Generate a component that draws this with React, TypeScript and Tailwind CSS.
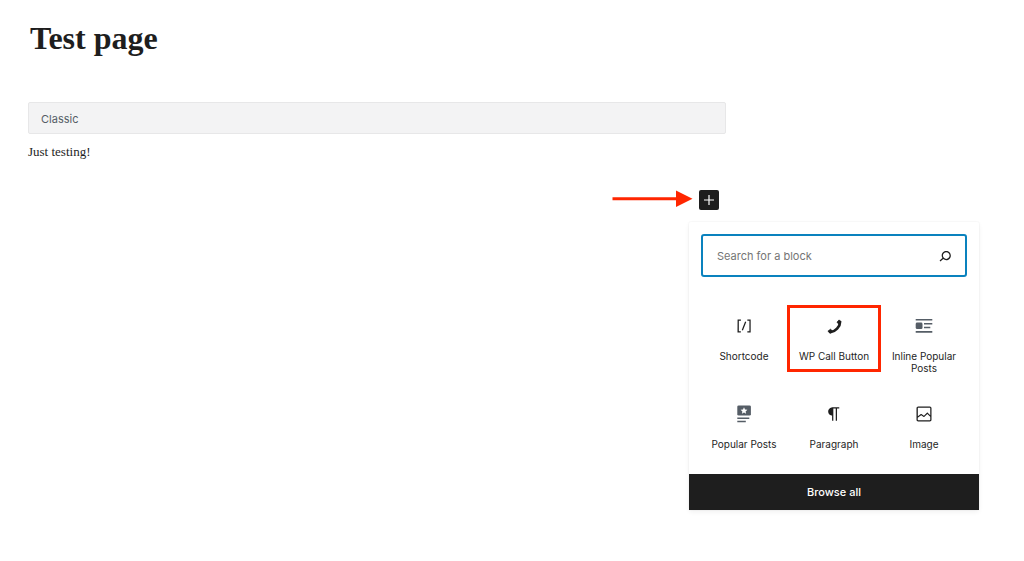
import type { ReactNode } from "react";

const icon = (path: string) => (
  <svg viewBox="0 0 24 24" className="size-5" fill="currentColor" aria-hidden="true">
    <path d={path} />
  </svg>
);

const SearchIcon = () =>
  icon(
    "M13.5 6C10.5 6 8 8.5 8 11.5c0 1.1.3 2.1.9 3l-3.4 3 1 1.1 3.4-2.9c1 .9 2.2 1.4 3.6 1.4 3 0 5.5-2.5 5.5-5.5C19 8.5 16.5 6 13.5 6zm0 9.5c-2.2 0-4-1.8-4-4s1.8-4 4-4 4 1.8 4 4-1.8 4-4 4z"
  );

const PhoneIcon = () => (
  <svg
    viewBox="0 0 17 17"
    className="size-[17px]"
    fill="none"
    stroke="currentColor"
    strokeLinejoin="round"
    aria-hidden="true"
  >
    <path d="M14 4.200C14.200 8.300 9.200 13.800 4.400 14.200" strokeWidth="2.7" strokeLinecap="round" />
    <path
      d="M11 4.300L13.200 1.900L15 3.800L13 6.200zM1.900 13.300L4.500 11.300L6.400 13L4.200 15.100z"
      fill="currentColor"
      strokeWidth="0.9"
    />
  </svg>
);

const InlinePostsIcon = () => (
  <svg viewBox="0 0 20 20" className="size-5 text-[#555d66]" fill="currentColor" aria-hidden="true">
    <path d="M1.7 2.9h16.6v1.6H1.7zM1.7 15.1h16.6v1.6H1.7zM10 7h8.3v1.5H10zM10 10.8h6.3v1.5H10z" />
    <rect x="1.7" y="6.5" width="6.8" height="6.6" rx="1.4" />
  </svg>
);

const PopularPostsIcon = () => (
  <svg viewBox="0 0 20 20" className="size-5 text-[#555d66]" aria-hidden="true">
    <rect x="3.3" y="1.4" width="13.6" height="10.2" rx="1.4" fill="currentColor" />
    <path d="M3.3 13.4h12v1.5h-12zM3.3 16.8h8.5v1.5H3.3z" fill="currentColor" />
    <path
      d="M10 3.3l1 2.3 2.4.2-1.8 1.6.5 2.4L10 8.5 7.9 9.8l.5-2.4-1.8-1.6 2.4-.2z"
      fill="#fff"
    />
  </svg>
);

type Block = { name: string; icon: ReactNode; highlighted?: boolean };

const blocks: Block[] = [
  {
    name: "Shortcode",
    icon: icon(
      "M16 4.2v1.5h2.5v12.5H16v1.5h4V4.2h-4zM4.2 19.8h4v-1.5H5.8V5.8h2.5V4.2h-4l-.1 15.6zm5.1-3.1l1.4.6 4-10-1.4-.6-4 10z"
    ),
  },
  { name: "WP Call Button", icon: <PhoneIcon />, highlighted: true },
  { name: "Inline Popular Posts", icon: <InlinePostsIcon /> },
  { name: "Popular Posts", icon: <PopularPostsIcon /> },
  {
    name: "Paragraph",
    icon: icon(
      "M18.3 4H9.9v-.1l-.9.2c-2.3.4-4 2.4-4 4.8s1.7 4.4 4 4.8l.7.1V20h1.5V5.5h2.9V20h1.5V5.5h2.7V4z"
    ),
  },
  {
    name: "Image",
    icon: icon(
      "M19 3H5c-1.1 0-2 .9-2 2v14c0 1.1.9 2 2 2h14c1.1 0 2-.9 2-2V5c0-1.1-.9-2-2-2zM5 4.5h14c.3 0 .5.2.5.5v8.4l-3-2.9c-.3-.3-.8-.3-1 0L11.9 14 9 12c-.3-.2-.6-.2-.8 0l-3.6 2.6V5c-.1-.3.1-.5.4-.5zm14 15H5c-.3 0-.5-.2-.5-.5v-2.4l4.1-3 3 1.9c.3.2.7.2.9-.1L16 12l3.5 3.4V19c0 .3-.2.5-.5.5z"
    ),
  },
];

function BlockItem({ block }: { block: Block }) {
  return (
    <button
      type="button"
      className={
        "flex h-[63px] flex-col items-center justify-start pt-[7px] text-[10px] leading-3 text-[#1e1e1e] " +
        (block.highlighted ? "outline-3 -outline-offset-1 outline-[#ff2600]" : "")
      }
    >
      <span className="flex h-6 shrink-0 items-center">{block.icon}</span>
      <span className="mt-3">{block.name}</span>
    </button>
  );
}

function InserterMenu() {
  return (
    <div className="absolute top-8 -left-2.5 w-[290px] rounded-xs bg-white shadow-[0_0_0_1px_rgba(0,0,0,0.02),0_2px_5px_rgba(0,0,0,0.06)]">
      <div className="p-3 pb-0">
        <div className="flex h-[43px] items-center rounded-[3px] border-2 border-[#0a82be] pr-2.5 pl-3.5">
          <input
            type="search"
            aria-label="Search for a block"
            placeholder="Search for a block"
            className="h-5 min-w-0 flex-1 text-[11px] text-[#1e1e1e] outline-none placeholder:text-[#757575]"
          />
          <button type="button" aria-label="Search">
            <SearchIcon />
          </button>
        </div>
      </div>
      <div className="grid grid-cols-3 gap-y-[25px] px-2.5 pt-[30px] pb-4">
        {blocks.map((block) => (
          <BlockItem key={block.name} block={block} />
        ))}
      </div>
      <button
        type="button"
        className="flex h-9 w-full items-center justify-center bg-[#1e1e1e] text-[11px] font-medium text-white"
      >
        Browse all
      </button>
    </div>
  );
}

export default function App() {
  return (
    <main className="min-h-screen bg-white px-7 pt-[18px] font-['Inter',sans-serif] text-[#1e1e1e]">
      <div className="max-w-[698px]">
        <h1 className="pl-0.5 font-['Liberation_Serif',serif] text-[32px] leading-10 font-bold">
          Test page
        </h1>
        <div className="mt-11 flex h-8 items-center rounded-xs border border-[#e7e7e8] bg-[#f3f3f4] px-3 pt-0.5 text-[11px] text-[#555d66]">
          Classic
        </div>
        <p className="mt-2 font-['Liberation_Serif',serif] text-[13px] leading-5">Just testing!</p>
        <div className="mt-7 flex items-center justify-end gap-1.5 pr-[7px]">
          <svg viewBox="0 0 81 20" className="h-5 w-[81px]" fill="#ff2600" aria-hidden="true">
            <path d="M0.5 7.3H64V0.5L80.5 8.8L64 17V10.3H0.5z" />
          </svg>
          <div className="relative">
            <button
              type="button"
              aria-label="Add block"
              className="flex size-5 items-center justify-center rounded-xs bg-[#1e1e1e] text-white"
            >
              <svg viewBox="0 0 20 20" className="size-5" aria-hidden="true">
                <path d="M10 5v10M5 10h10" stroke="currentColor" strokeWidth="1.2" />
              </svg>
            </button>
            <InserterMenu />
          </div>
        </div>
      </div>
    </main>
  );
}
